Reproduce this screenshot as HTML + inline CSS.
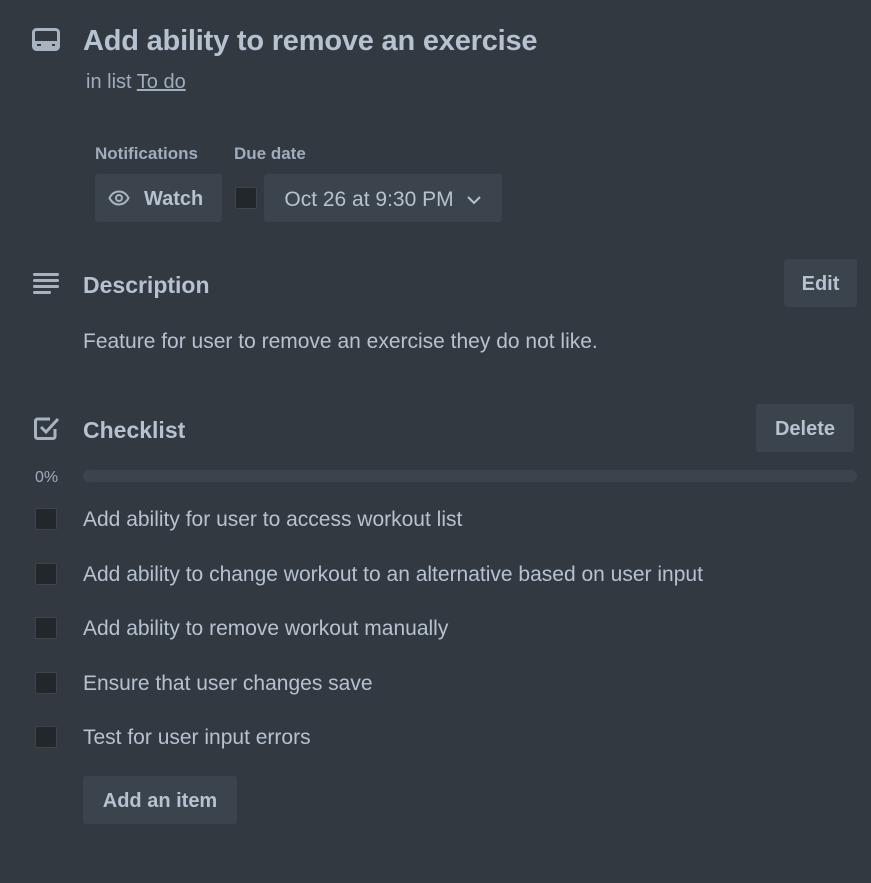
<!DOCTYPE html>
<html><head><style>
body{margin:0;width:871px;height:883px;background:#323940;color:#b6c2cf;font-family:"Liberation Sans",sans-serif;position:relative;overflow:hidden}
.a{position:absolute;white-space:nowrap}
.btn{position:absolute;background:#3b434c;border-radius:3px;font-weight:bold;font-size:20px;color:#b6c2cf;display:flex;align-items:center;justify-content:center;padding-top:3px;box-sizing:border-box}
.cb{position:absolute;width:22px;height:22px;background:#22272b;border:1px solid #3d444c;border-radius:2px;box-sizing:border-box}
.item{position:absolute;left:83px;font-size:21px}
</style></head><body>
<svg class="a" style="left:32px;top:28px" width="28" height="24" viewBox="0 0 28 24"><rect x="1.5" y="1.5" width="25" height="20" rx="3" fill="none" stroke="#a8b3c0" stroke-width="3"/><rect x="2" y="13" width="24" height="8" fill="#a8b3c0"/><rect x="5" y="16" width="4" height="2" fill="#323940"/><rect x="20" y="16" width="3" height="2" fill="#323940"/></svg>
<div class="a" style="left:83px;top:25px;font-size:29px;font-weight:bold;letter-spacing:-0.2px">Add ability to remove an exercise</div>
<div class="a" style="left:86px;top:71px;font-size:20px;color:#9fadbc">in list <span style="text-decoration:underline">To do</span></div>
<div class="a" style="left:95px;top:144px;font-size:17px;font-weight:bold;color:#9fadbc">Notifications</div>
<div class="a" style="left:234px;top:144px;font-size:17px;font-weight:bold;color:#9fadbc">Due date</div>
<div class="btn" style="left:95px;top:174px;width:127px;height:48px;justify-content:flex-start"><svg style="margin-left:13px;margin-right:14px;margin-top:-3px" width="22" height="16" viewBox="0 0 22 16"><path d="M1.5 8C4 3 7.5 1.5 11 1.5S18 3 20.5 8C18 13 14.5 14.5 11 14.5S4 13 1.5 8Z" fill="none" stroke="#a8b3c0" stroke-width="2"/><circle cx="11" cy="8" r="3" fill="none" stroke="#a8b3c0" stroke-width="2"/></svg>Watch</div>
<div class="cb" style="left:235px;top:187px;width:22px;height:22px"></div>
<div class="btn" style="left:264px;top:174px;width:238px;height:48px;font-weight:normal;font-size:21px">Oct 26 at 9:30 PM<svg style="margin-left:12px" width="16" height="10" viewBox="0 0 16 10"><path d="M2 2l6 6 6-6" fill="none" stroke="#b6c2cf" stroke-width="2"/></svg></div>
<svg class="a" style="left:32px;top:272px" width="28" height="22" viewBox="0 0 28 22"><g fill="#a8b3c0"><rect x="1" y="1" width="26" height="3" rx="1.5"/><rect x="1" y="7" width="26" height="3" rx="1.5"/><rect x="1" y="13" width="26" height="3" rx="1.5"/><rect x="1" y="19" width="18" height="3" rx="1.5"/></g></svg>
<div class="a" style="left:83px;top:272px;font-size:23px;font-weight:bold">Description</div>
<div class="btn" style="left:784px;top:259px;width:73px;height:48px">Edit</div>
<div class="a" style="left:83px;top:330px;font-size:21px">Feature for user to remove an exercise they do not like.</div>
<svg class="a" style="left:33px;top:415px" width="28" height="28" viewBox="0 0 28 28"><path d="M22 14v7.5a2 2 0 0 1-2 2H4.5a2 2 0 0 1-2-2V6a2 2 0 0 1 2-2H17" fill="none" stroke="#a8b3c0" stroke-width="3"/><path d="M8 12l5 5L25 4" fill="none" stroke="#a8b3c0" stroke-width="3"/></svg>
<div class="a" style="left:83px;top:417px;font-size:23px;font-weight:bold">Checklist</div>
<div class="btn" style="left:756px;top:404px;width:98px;height:48px">Delete</div>
<div class="a" style="left:35px;top:469px;font-size:16px;color:#9fadbc">0%</div>
<div class="a" style="left:83px;top:470px;width:774px;height:12px;border-radius:6px;background:#3b434c"></div>
<div class="cb" style="left:35px;top:508px"></div><div class="item" style="top:508px">Add ability for user to access workout list</div>
<div class="cb" style="left:35px;top:563px"></div><div class="item" style="top:563px">Add ability to change workout to an alternative based on user input</div>
<div class="cb" style="left:35px;top:617px"></div><div class="item" style="top:617px">Add ability to remove workout manually</div>
<div class="cb" style="left:35px;top:672px"></div><div class="item" style="top:672px">Ensure that user changes save</div>
<div class="cb" style="left:35px;top:726px"></div><div class="item" style="top:726px">Test for user input errors</div>
<div class="btn" style="left:83px;top:776px;width:154px;height:48px">Add an item</div>
</body></html>
